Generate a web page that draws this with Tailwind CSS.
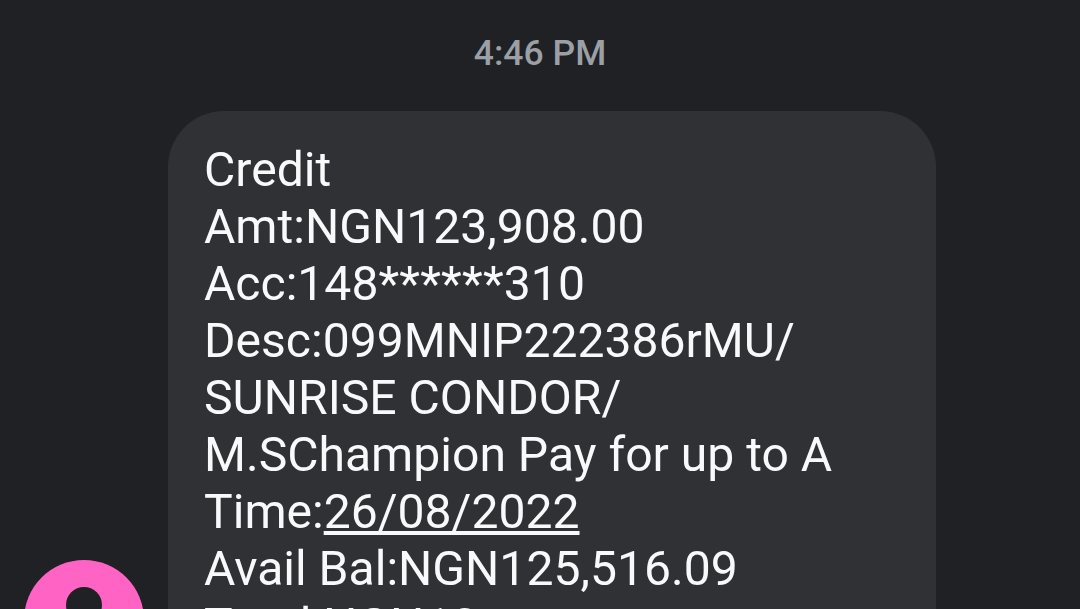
<!DOCTYPE html>
<html><head><script src="https://cdn.jsdelivr.net/npm/@tailwindcss/browser@4"></script></head>
<body class="m-0 bg-[#202124]">
<div class="relative w-[1080px] h-[609px] overflow-hidden bg-[#202124] font-['Roboto',sans-serif]">
<div class="h-[111px] pt-[31px] text-center text-[35.5px] leading-[44px] font-medium text-[#9aa0a6]">4:46 PM</div>
<div class="ml-[168px] w-[768px] h-[600px] rounded-[56px] bg-[#303134] pl-[36px] pt-[30px] text-[48.08px] leading-[57px] text-[#f8f9fa]">
<div>Credit</div>
<div>Amt:NGN123,908.00</div>
<div>Acc:148<span class="tracking-[0.2px]">******</span>310</div>
<div>Desc:099MNIP222386rMU/</div>
<div>SUNRISE CONDOR/</div>
<div>M.SChampion Pay for up to A</div>
<div>Time:<span class="underline">26/08/2022</span></div>
<div>Avail Bal:NGN125,516.09</div>
<div>Total:NGN10</div>
</div>
<div class="absolute left-[24px] top-[560px] w-[120px] h-[120px] rounded-full bg-[#ff63c4] overflow-hidden">
<div class="absolute left-[42px] top-[27px] w-[36px] h-[36px] rounded-full bg-[#202124]"></div>
</div>
</div>
</body></html>
